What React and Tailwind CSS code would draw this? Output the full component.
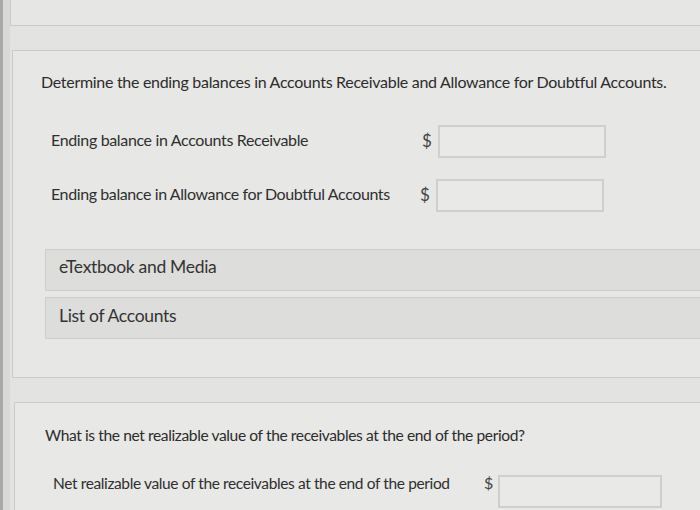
export default function App() {
  const font = { fontFamily: "Lato, 'Open Sans', sans-serif" };
  return (
    <div className="w-[700px] h-[510px] overflow-hidden flex bg-[#e3e3e1] text-[#2f2f2f]" style={font}>
      <div className="w-[3px] shrink-0 bg-[#a9a9a7]" />
      <div className="w-[7px] shrink-0 bg-[#d9d9d7]" />
      <div className="flex-1 flex flex-col min-w-0">
        {/* top card remnant */}
        <div className="h-[26px] shrink-0 border-b border-l border-[#c9c9c7] bg-[#e6e6e4] mr-[-4px]" />
        <div className="h-[24px] shrink-0" />
        {/* main card */}
        <div className="ml-[2px] mr-[-6px] h-[328px] shrink-0 border border-[#cacac8] bg-[#e7e7e5] pl-[28px] pt-[20px]">
          <p className="text-[16px] leading-[22px] tracking-[-0.3px] text-[#2c2c2c] whitespace-nowrap">
            Determine the ending balances in Accounts Receivable and Allowance for Doubtful Accounts.
          </p>
          <div className="mt-[32px] pl-[10px] flex flex-col gap-[21px]">
            <div className="flex items-center h-[33px]">
              <span className="w-[364px] text-[16px] tracking-[-0.35px] pb-[3px] whitespace-nowrap">Ending balance in Accounts Receivable</span>
              <span className="w-[23px] pl-[7px] text-[17px] pb-[2px] text-[#444]">$</span>
              <div className="w-[168px] h-[33px] border-2 border-[#cfcfcd] bg-[#e9e9e7]" />
            </div>
            <div className="flex items-center h-[33px]">
              <span className="w-[362px] text-[16px] tracking-[-0.4px] pb-[3px] whitespace-nowrap">Ending balance in Allowance for Doubtful Accounts</span>
              <span className="w-[23px] pl-[7px] text-[17px] pb-[2px] text-[#444]">$</span>
              <div className="w-[168px] h-[33px] border-2 border-[#cfcfcd] bg-[#e9e9e7]" />
            </div>
          </div>
          <div className="mt-[37px] ml-[4px] flex flex-col gap-[6px]">
            <div className="h-[42px] border border-[#cdcdcb] bg-[#dddddb] flex items-center pl-[13px] pb-[5px] text-[17.5px] tracking-[-0.3px] text-[#333]">
              eTextbook and Media
            </div>
            <div className="h-[42px] border border-[#cdcdcb] bg-[#dddddb] flex items-center pl-[13px] pb-[4px] text-[17.5px] tracking-[-0.3px] text-[#333]">
              List of Accounts
            </div>
          </div>
        </div>
        <div className="h-[24px] shrink-0" />
        {/* third card */}
        <div className="ml-[4px] mr-[-6px] flex-1 border-t border-l border-[#cacac8] bg-[#e8e8e6] pl-[30px] pt-[21px]">
          <p className="text-[15.6px] leading-[22px] tracking-[-0.4px] text-[#2c2c2c] whitespace-nowrap">
            What is the net realizable value of the receivables at the end of the period?
          </p>
          <div className="mt-[29px] pl-[8px] flex items-start h-[33px]">
            <span className="w-[434px] mt-[-3px] leading-[22px] text-[15.5px] tracking-[-0.38px] whitespace-nowrap">Net realizable value of the receivables at the end of the period</span>
            <span className="w-[11px] mt-[-3px] leading-[22px] text-[16px] text-[#444] -ml-[3px] mr-[3px]">$</span>
            <div className="w-[164px] h-[33px] border-2 border-[#cfcfcd] bg-[#e9e9e7]" />
          </div>
        </div>
      </div>
    </div>
  );
}
